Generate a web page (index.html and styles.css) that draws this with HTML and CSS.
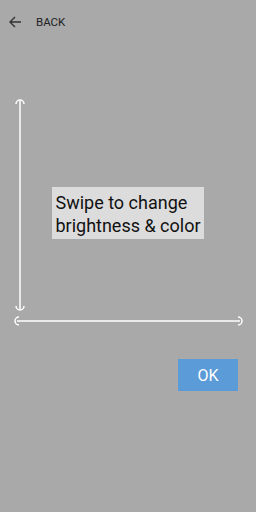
FILE: index.html
```html
<!DOCTYPE html>
<html lang="en">
<head>
    <meta charset="UTF-8">
    <meta name="viewport" content="width=device-width, initial-scale=1.0">
    <title>Swipe guide</title>
    <link rel="stylesheet" href="styles.css">
</head>
<body>

    <header class="top-bar">
        <svg class="back-icon" width="14" height="14" viewBox="0 0 14 14">
            <path d="M13 7H2M7 2L2 7l5 5" fill="none" stroke="#333" stroke-width="1.4"/>
        </svg>
        <span class="back-text">BACK</span>
    </header>

    <main class="guide">
        <svg class="guide-lines" width="256" height="232" viewBox="0 0 256 232">
            <g fill="none" stroke="#fff" stroke-width="1.5">
                <path d="M20 5V213"/>
                <path d="M16 8A4 4 0 0 1 24 8"/>
                <path d="M16 210A4 4 0 0 0 24 210"/>
                <path d="M17 225H240"/>
                <path d="M19 221A4 4 0 0 0 19 229"/>
                <path d="M238 221A4 4 0 0 1 238 229"/>
            </g>
        </svg>
        <div class="hint">Swipe to change<br>brightness &amp; color</div>
    </main>

    <div class="actions">
        <button class="ok-button" type="button">OK</button>
    </div>

</body>
</html>
```

FILE: styles.css
```css
body {
    font-family: Roboto, "Liberation Sans", sans-serif;
    background-color: #a9a9a9;
    margin: 0;
    padding: 0;
    width: 256px;
    height: 512px;
}

.top-bar {
    display: flex;
    align-items: center;
    height: 44px;
    padding-left: 8px;
}

.back-icon {
    display: block;
}

.back-text {
    margin-left: 14px;
    font-size: 11.5px;
    color: #222;
}

.guide {
    display: grid;
    margin-top: 52px;
    height: 232px;
}

.guide-lines,
.hint {
    grid-area: 1 / 1;
}

.hint {
    align-self: center;
    justify-self: center;
    margin-top: 2px;
    background-color: #dcdcdc;
    color: #111;
    font-size: 18px;
    line-height: 22.5px;
    padding: 5px 3px 2px;
}

.actions {
    display: flex;
    justify-content: flex-end;
    padding-right: 18px;
    margin-top: 31px;
}

.ok-button {
    width: 60px;
    height: 32px;
    border: none;
    background-color: #5b9bd8;
    color: #fff;
    font-family: inherit;
    font-size: 16px;
    padding: 0;
}
```
